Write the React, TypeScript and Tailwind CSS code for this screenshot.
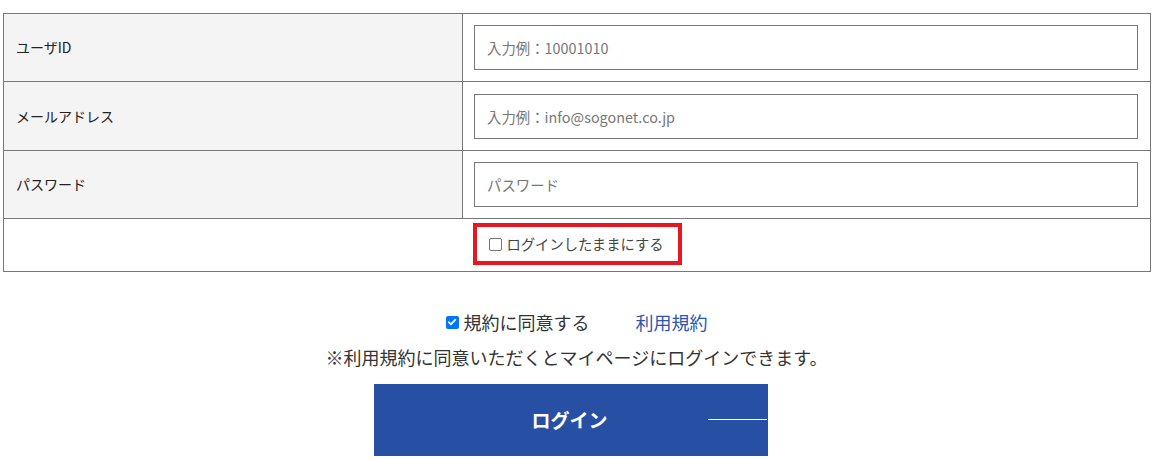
import React from "react";

const font = { fontFamily: '"Noto Sans CJK JP", "Noto Sans", sans-serif' };

function Row({ label, placeholder, h }: { label: string; placeholder: string; h: string }) {
  return (
    <div className={`flex border-b border-[#777] ${h}`}>
      <div className="w-[459px] shrink-0 bg-[#f4f4f4] border-r border-[#777] flex items-center pl-[12px] text-[14px] text-[#222]">
        {label}
      </div>
      <div className="flex-1 flex items-center pl-[11px] pr-[12px]">
        <input
          className="w-full h-[45px] border border-[#777] px-[12px] text-[14.4px] text-[#222] placeholder:text-[#777] outline-none bg-white"
          style={font}
          placeholder={placeholder}
        />
      </div>
    </div>
  );
}

export default function App() {
  return (
    <div className="w-[1165px] h-[459px] overflow-hidden bg-white" style={font}>
      <div className="ml-[3px] mt-[13px] w-[1148px] border-t border-l border-r border-[#777]">
        <Row label="ユーザID" placeholder="入力例：10001010" h="h-[68px]" />
        <Row label="メールアドレス" placeholder="入力例：info@sogonet.co.jp" h="h-[69px]" />
        <Row label="パスワード" placeholder="パスワード" h="h-[68px]" />
        <div className="h-[53px] border-b border-[#777] flex items-center justify-center">
          <div className="w-[209px] h-[42px] border-[4px] border-[#e8161f] flex items-center pl-[12px] gap-[5px] mt-[-2px]">
            <span className="w-[13px] h-[13px] border border-[#767676] rounded-[2px] bg-white shrink-0" />
            <span className="text-[14.3px] text-[#444] leading-none">ログインしたままにする</span>
          </div>
        </div>
      </div>

      <div className="mt-[37px] flex items-center justify-center h-[26px] mr-[12px]">
        <span className="w-[13px] h-[13px] rounded-[2px] bg-[#0075ff] flex items-center justify-center shrink-0">
          <svg width="10" height="10" viewBox="0 0 10 10">
            <path d="M1.8 5.2 L4 7.3 L8.3 2.6" stroke="white" strokeWidth="1.8" fill="none" strokeLinecap="round" strokeLinejoin="round" />
          </svg>
        </span>
        <span className="ml-[5px] text-[18px] text-[#333] leading-[26px]">規約に同意する</span>
        <a className="ml-[46px] text-[18px] text-[#2a55b0] leading-[26px]">利用規約</a>
      </div>
      <div className="mt-[9px] mr-[12px] text-center text-[18px] text-[#333] leading-[26px]">
        ※利用規約に同意いただくとマイページにログインできます。
      </div>

      <div className="mt-[14px] ml-[374px] w-[394px] h-[72px] bg-[#2750a5] relative flex items-center justify-center">
        <span className="text-white text-[19px] font-bold mr-[3px]">ログイン</span>
        <span className="absolute right-[1px] top-[35px] w-[59px] h-[1px] bg-white" />
      </div>
    </div>
  );
}
